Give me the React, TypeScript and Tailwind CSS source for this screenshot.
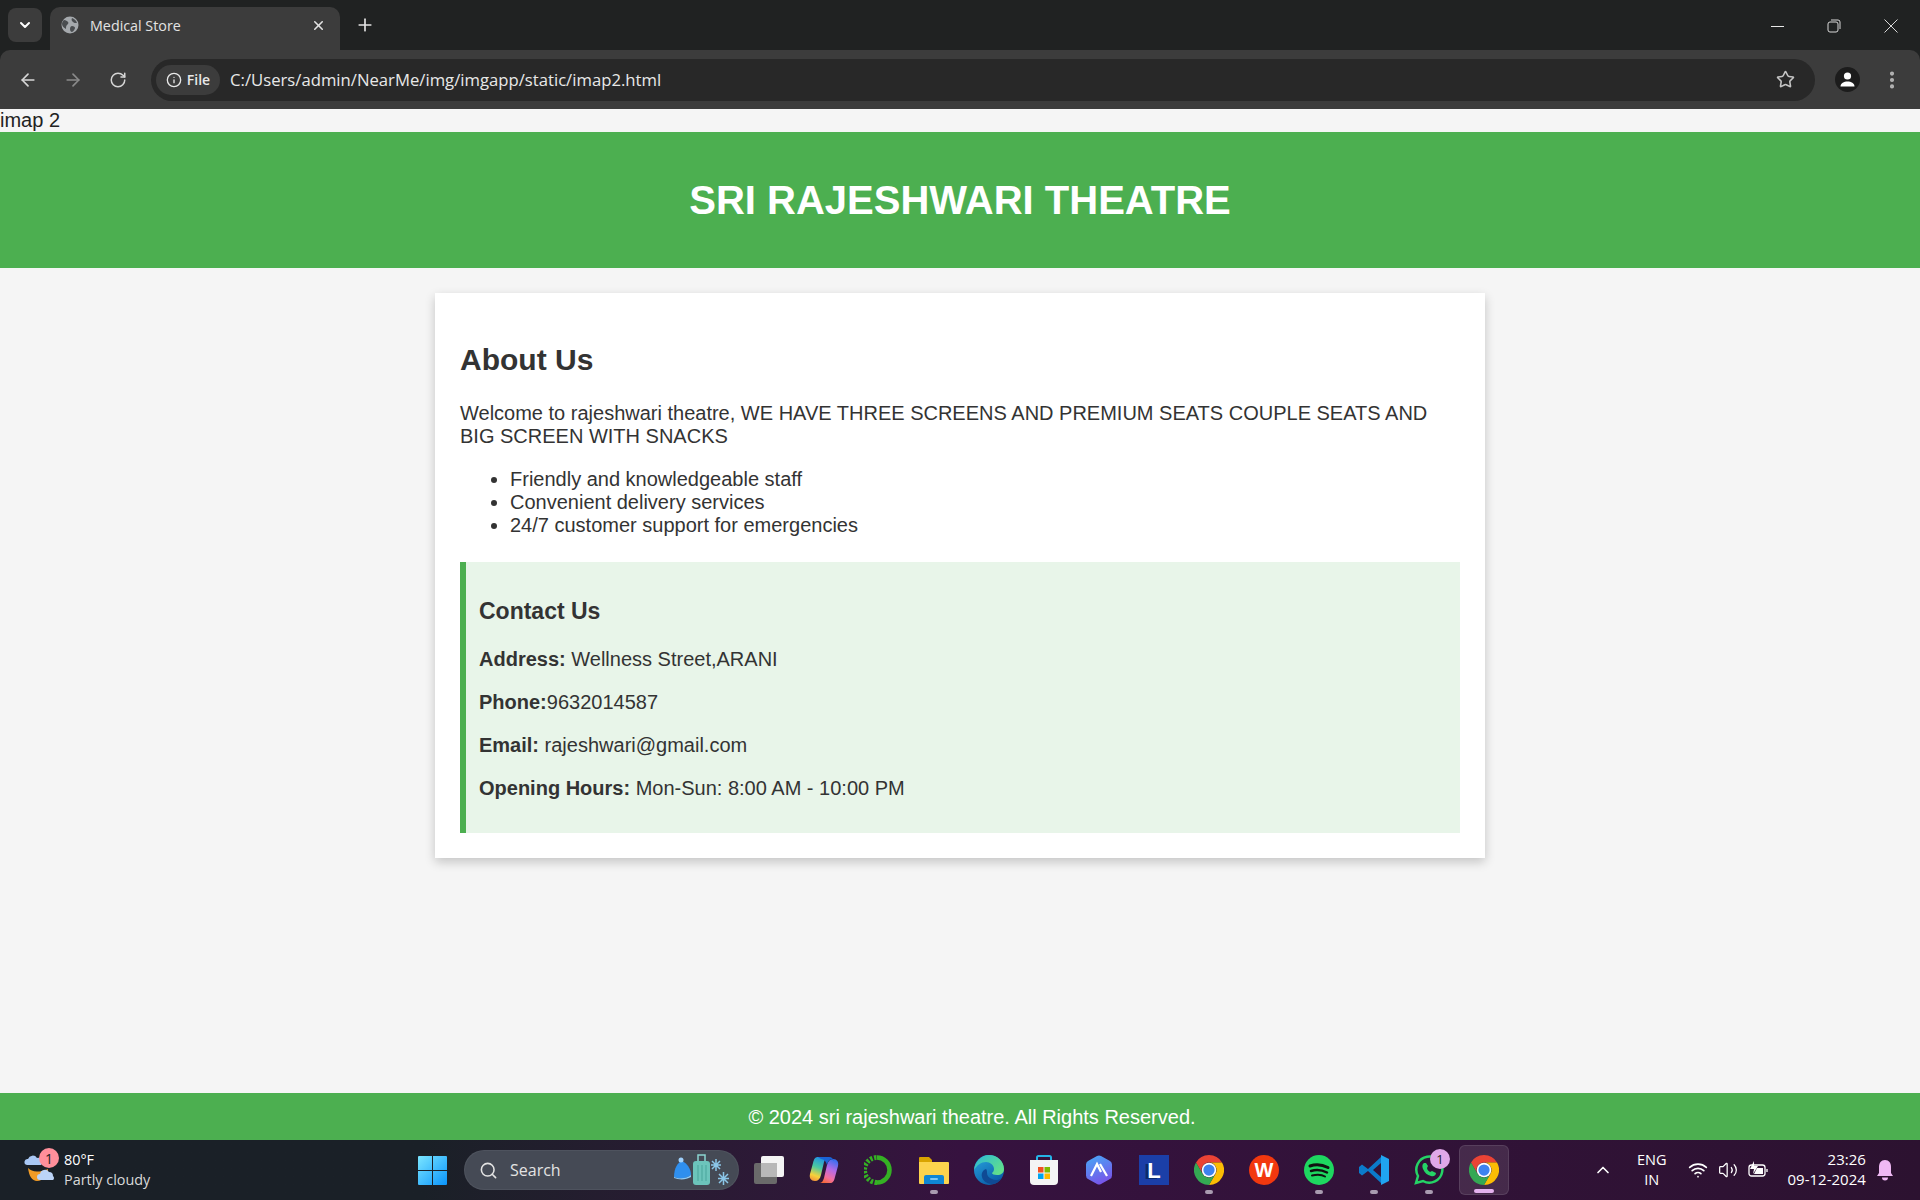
import React from "react";
import {
  ArrowLeft,
  ArrowRight,
  ChevronDown,
  ChevronUp,
  Info,
  MoreVertical,
  Plus,
  RotateCw,
  Search,
  Star,
  Volume2,
  Wifi,
  X,
} from "lucide-react";

const ChromeLogo = ({ size = 30 }: { size?: number }) => (
  <svg width={size} height={size} viewBox="0 0 24 24">
    <path d="M12 0A12 12 0 0 1 22.4 6H12A6 6 0 0 0 6.800 15L1.600 6A12 12 0 0 1 12 0Z" fill="#ea4335" />
    <path d="M22.400 6A12 12 0 0 1 12 24L17.200 15A6 6 0 0 0 12 6Z" fill="#fbbc04" />
    <path d="M1.600 6 6.800 15A6 6 0 0 0 17.200 15L12 24A12 12 0 0 1 1.600 6Z" fill="#34a853" />
    <circle cx="12" cy="12" r="5.800" fill="#fff" />
    <circle cx="12" cy="12" r="4.500" fill="#3d82f0" />
  </svg>
);

const TaskIcon = ({ children, dot, active }: { children: React.ReactNode; dot?: boolean; active?: boolean }) => (
  <div className={`relative flex h-[50px] w-[50px] shrink-0 items-center justify-center rounded-md ${active ? "border border-white/10 bg-white/10" : ""}`}>
    {children}
    {dot && <div className="absolute bottom-[1px] h-[4px] w-[8px] rounded-full bg-[#a99bb0]" />}
    {active && <div className="absolute bottom-[1px] h-[4px] w-[20px] rounded-full bg-[#e4b2ee]" />}
  </div>
);

const BrowserBar = () => (
  <div className="bg-[#202222] font-['Open_Sans',sans-serif]">
    <div className="flex h-[50px] items-end pl-[8px]">
      <div className="mb-[8px] flex h-[34px] w-[34px] items-center justify-center rounded-lg bg-[#3c3c3c] text-white">
        <ChevronDown size={16} strokeWidth={3} />
      </div>
      <div className="ml-[8px] flex h-[43px] w-[290px] items-center rounded-t-[10px] bg-[#3c3c3c] pb-[7px] pl-[11px] pr-[14px]">
        <svg width="18" height="18" viewBox="0 0 18 18">
          <circle cx="9" cy="9" r="8.500" fill="#a5a9ad" />
          <path d="M3 4c2 0 3 1 4 2s0 2-1 3-1 2-1 4c-2-1-4-3-4-5s1-3 2-4ZM11 2c2 1 4 2 5 5-2 0-3 0-4-1s-2-2-1-4ZM11 10c2 0 3 1 3 2s-2 4-3 4-2-1-2-3 1-3 2-3Z" fill="#4a4d50" />
        </svg>
        <span className="ml-[11px] flex-1 text-[14.3px] text-[#e3e3e3]">Medical Store</span>
        <X size={15} strokeWidth={2.5} className="text-[#e3e3e3]" />
      </div>
      <Plus size={20} strokeWidth={2} className="mb-[15px] ml-[15px] text-[#e3e3e3]" />
      <div className="flex-1" />
      <div className="mb-[17px] flex items-center text-[#d8d8d8]">
        <div className="h-[1px] w-[13px] bg-[#e8e8e8]" />
        <svg width="14" height="14" viewBox="0 0 14 14" fill="none" stroke="currentColor" strokeWidth="1" className="ml-[43px]">
          <rect x="1" y="3" width="10" height="10" rx="2" />
          <path d="M4 1h7a2 2 0 0 1 2 2v7" />
        </svg>
        <svg width="14" height="14" viewBox="0 0 14 14" fill="none" stroke="currentColor" strokeWidth="1" className="ml-[43px] mr-[22px]">
          <path d="M.5.500l13 13M13.500.500l-13 13" />
        </svg>
      </div>
    </div>
    <div className="flex h-[59px] items-center rounded-t-[10px] bg-[#3c3c3c] pl-[18px] pr-[17px]">
      <ArrowLeft size={20} className="text-[#d6d6d6]" />
      <ArrowRight size={20} className="ml-[25px] text-[#8a8a8a]" />
      <RotateCw size={18} className="ml-[26px] text-[#d6d6d6]" />
      <div className="ml-[24px] flex h-[42px] flex-1 items-center rounded-full bg-[#282828] pl-[5px] pr-[20px]">
        <div className="flex h-[30px] w-[64px] items-center justify-center gap-[5px] rounded-full bg-[#3c3c3c] text-[#e8e8e8]">
          <Info size={16} />
          <span className="pb-[1px] text-[14px] font-semibold">File</span>
        </div>
        <span className="ml-[10px] flex-1 pb-[1px] text-[16.7px] text-[#e8e8e8]">C:/Users/admin/NearMe/img/imgapp/static/imap2.html</span>
        <Star size={19} strokeWidth={2} className="text-[#c4c4c4]" />
      </div>
      <div className="ml-[20px] flex h-[25px] w-[25px] items-center justify-center rounded-full bg-[#1c1c1c]">
        <svg width="17" height="17" viewBox="0 0 17 17" fill="#fff">
          <circle cx="8.500" cy="5" r="3.600" />
          <path d="M1.500 15.500c0-3.500 3.500-5 7-5s7 1.500 7 5Z" />
        </svg>
      </div>
      <MoreVertical size={22} strokeWidth={2.5} className="ml-[21px] text-[#b5b5b5]" />
    </div>
  </div>
);

const Taskbar = () => (
  <div className="flex h-[60px] items-center bg-gradient-to-r from-[#1a2027] from-[22%] via-[#36123f] via-[50%] to-[#2c1230] pl-[24px] pr-[15px] font-['Open_Sans',sans-serif] text-white">
    {/* weather */}
    <div className="relative flex w-[394px] shrink-0 items-center">
      <svg width="32" height="34" viewBox="0 0 32 34">
        <path d="M4 15c4 4 10 5 20 1 0 7-5 12-11 12-5 0-8-5-9-13Z" fill="#f29b25" />
        <path d="M3 12a3 3 0 0 1 1-6 5 5 0 0 1 9-1 4 4 0 0 1 5 4 3 3 0 0 1-1 3Z" fill="#a9c8f5" />
        <path d="M16 27a3 3 0 0 1 0-6 5 5 0 0 1 9-2 4 4 0 0 1 4 4 2.500 2.500 0 0 1 0 4Z" fill="#bcd4f8" />
      </svg>
      <div className="absolute left-[15px] top-[-2px] flex h-[20px] w-[20px] items-center justify-center rounded-full bg-[#ff8f9b] text-[14px] text-[#222]">1</div>
      <div className="ml-[8px] text-[14.4px] leading-[20px]">
        <div>80°F</div>
        <div className="text-[#d9d9d9]">Partly cloudy</div>
      </div>
    </div>
    {/* windows */}
    <svg width="29" height="29" viewBox="0 0 29 29" className="shrink-0">
      <defs>
        <linearGradient id="win" x1="0" y1="0" x2="1" y2="1">
          <stop offset="0" stopColor="#7be6ff" />
          <stop offset="1" stopColor="#0a94fb" />
        </linearGradient>
      </defs>
      <path d="M0 1a1 1 0 0 1 1-1h13v14H0ZM15 0h13a1 1 0 0 1 1 1v13H15ZM0 15h14v14H1a1 1 0 0 1-1-1ZM15 15h14v13a1 1 0 0 1-1 1H15Z" fill="url(#win)" />
    </svg>
    {/* search */}
    <div className="ml-[17px] flex h-[40px] w-[275px] shrink-0 items-center rounded-full border border-white/5 bg-[#454a55] pl-[14px] pr-[8px]">
      <Search size={19} className="text-[#e3e3e3]" />
      <span className="ml-[12px] flex-1 text-[16px] text-[#e3e3e3]">Search</span>
      <svg width="64" height="34" viewBox="0 0 64 34">
        <path d="M8 24c0-9 4-15 8-16 5 2 9 8 9 14-5 4-12 4-17 2Z" fill="#2f8fee" />
        <path d="M8 24c5 2 12 2 17-2v2c-5 3-12 3-17 1Z" fill="#8ccbfa" />
        <circle cx="15" cy="7" r="2.500" fill="#9fd0fb" />
        <rect x="27" y="8" width="17" height="24" rx="3" fill="#6cc4bb" />
        <path d="M32 8V2h7v6" fill="none" stroke="#8ad5cf" strokeWidth="1.500" />
        <path d="M32 12v16M36 12v16M40 12v16" stroke="#49a59b" strokeWidth="1" />
        <g stroke="#8bc6e8" strokeWidth="1.500">
          <path d="M46 8l8 8M54 8l-8 8M50 6v12M45 12h10" />
          <path d="M53 21l9 9M62 21l-9 9M57.500 19v13M52 25.500h11" />
        </g>
      </svg>
    </div>
    {/* pinned apps */}
    <div className="ml-[5px] flex items-center gap-[5px]">
      <TaskIcon>
        <svg width="30" height="28" viewBox="0 0 30 28">
          <rect x="0" y="7" width="23" height="21" rx="2" fill="#6a6a6a" />
          <rect x="7" y="0" width="23" height="21" rx="2" fill="#f4f4f4" />
          <rect x="7" y="7" width="16" height="14" fill="#b8b8b8" />
        </svg>
      </TaskIcon>
      <TaskIcon>
        <svg width="30" height="28" viewBox="0 0 30 28">
          <defs>
            <linearGradient id="cop1" x1="0.600" y1="0" x2="0.300" y2="1">
              <stop offset="0" stopColor="#1d8fe8" />
              <stop offset="0.450" stopColor="#4cc9a0" />
              <stop offset="0.800" stopColor="#f7d23a" />
              <stop offset="1" stopColor="#f59a3a" />
            </linearGradient>
            <linearGradient id="cop2" x1="0.700" y1="0" x2="0.300" y2="1">
              <stop offset="0" stopColor="#3a6ff0" />
              <stop offset="0.400" stopColor="#b46ae6" />
              <stop offset="0.750" stopColor="#f36fa0" />
              <stop offset="1" stopColor="#f5693a" />
            </linearGradient>
          </defs>
          <path d="M9 1H20C17 1 16 3 15 6L12 19C11 23 9 25 6 25 2 25 0 22 1 18L4 7C5 3 6 1 9 1Z" fill="url(#cop1)" />
          <path d="M21 27H10C13 27 14 25 15 22L18 9C19 5 21 3 24 3 28 3 30 6 29 10L26 21C25 25 24 27 21 27Z" fill="url(#cop2)" />
          <path d="M9 1H20C23 1 24 3 25 5 22 2 19 4 18 9 17 5 15 3 12 3Z" fill="#1a63d8" />
        </svg>
      </TaskIcon>
      <TaskIcon>
        <svg width="30" height="30" viewBox="0 0 30 30" fill="none">
          <path d="M13 2.500a12.500 12.500 0 1 1 0 25" stroke="#35b024" strokeWidth="4.500" />
          <path d="M13 27.500a12.500 12.500 0 0 1 0-25" stroke="#35b024" strokeWidth="5" strokeDasharray="2.500 1.500" />
        </svg>
      </TaskIcon>
      <TaskIcon dot>
        <svg width="30" height="30" viewBox="0 0 30 30">
          <path d="M0 3a1 1 0 0 1 1-1h9l3 3v5H0Z" fill="#d9a400" />
          <path d="M0 7h29a1 1 0 0 1 1 1v20a1 1 0 0 1-1 1H1a1 1 0 0 1-1-1Z" fill="#fcd34d" />
          <path d="M5 22a2 2 0 0 1 2-2h16a2 2 0 0 1 2 2v7H5Z" fill="#0f86d4" />
          <rect x="11" y="23" width="8" height="2" rx="1" fill="#7cc7f5" />
        </svg>
      </TaskIcon>
      <TaskIcon>
        <svg width="30" height="30" viewBox="0 0 30 30">
          <defs>
            <linearGradient id="edge" x1="0" y1="0" x2="0.600" y2="1">
              <stop offset="0" stopColor="#2aa6e0" />
              <stop offset="1" stopColor="#0a5ea8" />
            </linearGradient>
            <linearGradient id="edge2" x1="0" y1="0" x2="1" y2="0.700">
              <stop offset="0" stopColor="#2bb8d8" />
              <stop offset="1" stopColor="#62e08a" />
            </linearGradient>
          </defs>
          <circle cx="15" cy="15" r="15" fill="url(#edge)" />
          <path d="M12 14c-3 1-5 4-4 8 1 4 5 7 10 7 4 0 7-2 10-6-3 2-7 3-10 1-3-1-5-3-5-6 0-2 0-3-1-4Z" fill="#0f4a94" />
          <path d="M15 0C23 0 30 6 30 14c0 4-3 6-7 6-3 0-5-1-5-2 1-1 2-2 2-4 0-4-4-7-8-7-5 0-9 3-12 8C1 7 7 0 15 0Z" fill="url(#edge2)" />
        </svg>
      </TaskIcon>
      <TaskIcon>
        <svg width="30" height="30" viewBox="0 0 30 30">
          <path d="M8 6V2.500A1.500 1.500 0 0 1 9.500 1h11A1.500 1.500 0 0 1 22 2.500V6" fill="none" stroke="#25b4e8" strokeWidth="2" />
          <path d="M1 5h28v21a4 4 0 0 1-4 4H5a4 4 0 0 1-4-4Z" fill="#f4f4f4" />
          <rect x="9" y="12" width="5.500" height="5.500" fill="#f25022" />
          <rect x="15.500" y="12" width="5.500" height="5.500" fill="#7fba00" />
          <rect x="9" y="18.500" width="5.500" height="5.500" fill="#00a4ef" />
          <rect x="15.500" y="18.500" width="5.500" height="5.500" fill="#ffb900" />
        </svg>
      </TaskIcon>
      <TaskIcon>
        <svg width="28" height="30" viewBox="0 0 28 30">
          <defs>
            <linearGradient id="hex" x1="0.300" y1="0" x2="0.700" y2="1">
              <stop offset="0" stopColor="#4aa3f5" />
              <stop offset="1" stopColor="#7a4fe8" />
            </linearGradient>
          </defs>
          <path d="M12 1a4 4 0 0 1 4 0l9 5a4 4 0 0 1 2 3.500v11a4 4 0 0 1-2 3.500l-9 5a4 4 0 0 1-4 0l-9-5a4 4 0 0 1-2-3.500v-11A4 4 0 0 1 3 6Z" fill="url(#hex)" />
          <path d="M6 21 12 9l4 8M15 9l7 12" fill="none" stroke="#fff" strokeWidth="2.200" />
        </svg>
      </TaskIcon>
      <TaskIcon>
        <div className="flex h-[30px] w-[30px] items-center justify-center bg-[#1b3fa8] font-['Liberation_Sans',sans-serif] text-[22px] font-bold text-white [text-shadow:-3px_1px_0_#0c2a6a]">L</div>
      </TaskIcon>
      <TaskIcon dot>
        <ChromeLogo />
      </TaskIcon>
      <TaskIcon>
        <div className="flex h-[30px] w-[30px] items-center justify-center rounded-full bg-[#f2380f] font-['Liberation_Sans',sans-serif] text-[20px] font-bold text-white">W</div>
      </TaskIcon>
      <TaskIcon dot>
        <svg width="30" height="30" viewBox="0 0 30 30" fill="none" stroke="#111" strokeLinecap="round">
          <circle cx="15" cy="15" r="15" fill="#1ed760" stroke="none" />
          <path d="M6 11c6-2 12-1.500 18 1.500" strokeWidth="3" />
          <path d="M7 16c5-1.500 11-1 16 1.500" strokeWidth="2.500" />
          <path d="M8 20.500c5-1 10-.800 13 1" strokeWidth="2" />
        </svg>
      </TaskIcon>
      <TaskIcon dot>
        <svg width="30" height="30" viewBox="0 0 30 30">
          <path d="M22 2 9 14 3 9.500 0 12V18L3 20.500 9 16 22 28V22L14 15 22 8Z" fill="#0b7bcb" />
          <path d="M22 0 30 4V26L22 30Z" fill="#20a4f0" />
        </svg>
      </TaskIcon>
      <TaskIcon dot>
        <svg width="30" height="30" viewBox="0 0 30 30" fill="none">
          <path d="M2 28l2-7A13 13 0 1 1 9 26Z" stroke="#25d366" strokeWidth="2.500" />
          <path d="M10 8c-2 1-2 4-1 6 2 4 4 6 8 7 3 1 5-1 5-3l-4-2-2 1c-1-1-3-2-3-4l1-2-2-3Z" fill="#25d366" />
        </svg>
        <div className="absolute right-[4px] top-[4px] flex h-[20px] w-[20px] items-center justify-center rounded-full bg-[#dfa8e8] text-[13px] text-[#222]">1</div>
      </TaskIcon>
      <TaskIcon active>
        <ChromeLogo />
      </TaskIcon>
    </div>
    {/* tray */}
    <ChevronUp size={20} className="ml-[84px] text-white" />
    <div className="ml-[24px] text-center text-[14.5px] leading-[20px]">
      <div>ENG</div>
      <div>IN</div>
    </div>
    <Wifi size={20} className="ml-[21px]" />
    <Volume2 size={20} strokeWidth={1.500} className="ml-[10px]" />
    <svg width="20" height="20" viewBox="0 0 20 20" fill="none" stroke="#fff" strokeWidth="1.300" className="ml-[10px]">
      <rect x="1" y="5" width="16" height="11" rx="2.500" />
      <path d="M19 9v3" />
      <path d="M6 1 2 9h4l-1 5 5-8H6Z" fill="#fff" stroke="none" />
      <path d="M6 14l3-6h6v6Z" fill="#fff" stroke="none" />
    </svg>
    <div className="ml-[20px] pb-[2px] text-right text-[15px] leading-[20px]">
      <div>23:26</div>
      <div>09-12-2024</div>
    </div>
    <svg width="18" height="22" viewBox="0 0 18 22" fill="#efb8f4" className="ml-[10px]">
      <path d="M9 1c4 0 6 3 6 7v6l2 3H1l2-3V8c0-4 2-7 6-7Z" />
      <path d="M6 18.500h6a3 3 0 0 1-6 0Z" />
    </svg>
  </div>
);

export default function App() {
  return (
    <div className="flex h-screen flex-col overflow-hidden bg-[#f5f5f5] font-['Liberation_Sans',Arial,sans-serif] text-[20px] leading-[23px] text-[#333]">
      <BrowserBar />
      <div className="text-[#222]">imap 2</div>

      <header className="bg-[#4caf50] py-[45px] text-center text-white">
        <h1 className="text-[40px] font-bold leading-[46px]">SRI RAJESHWARI THEATRE</h1>
      </header>

      <main className="flex-1">
        <div className="mx-auto mt-[25px] w-[1050px] bg-white p-[25px] shadow-[0_4px_10px_rgba(0,0,0,0.2)]">
          <h2 className="mt-[24px] text-[30px] font-bold leading-[35px]">About Us</h2>
          <p className="mt-[25px]">
            Welcome to rajeshwari theatre, WE HAVE THREE SCREENS AND PREMIUM SEATS COUPLE SEATS AND BIG SCREEN WITH SNACKS
          </p>
          <ul className="mt-[20px] list-disc pl-[50px]">
            <li>Friendly and knowledgeable staff</li>
            <li>Convenient delivery services</li>
            <li>24/7 customer support for emergencies</li>
          </ul>
          <div className="mt-[25px] border-l-[6px] border-[#4caf50] bg-[#e8f5e9] pb-[33px] pl-[13px] pr-[13px] pt-[35px]">
            <h3 className="text-[23px] font-bold leading-[28px]">Contact Us</h3>
            <div className="mt-[23px] flex flex-col gap-[20px]">
              <p><strong>Address:</strong> Wellness Street,ARANI</p>
              <p><strong>Phone:</strong>9632014587</p>
              <p><strong>Email:</strong> rajeshwari@gmail.com</p>
              <p><strong>Opening Hours:</strong> Mon-Sun: 8:00 AM - 10:00 PM</p>
            </div>
          </div>
        </div>
      </main>

      <footer className="bg-[#4caf50] pb-[11px] pl-[24px] pt-[13px] text-center text-white">
        © 2024 sri rajeshwari theatre. All Rights Reserved.
      </footer>
      <Taskbar />
    </div>
  );
}
